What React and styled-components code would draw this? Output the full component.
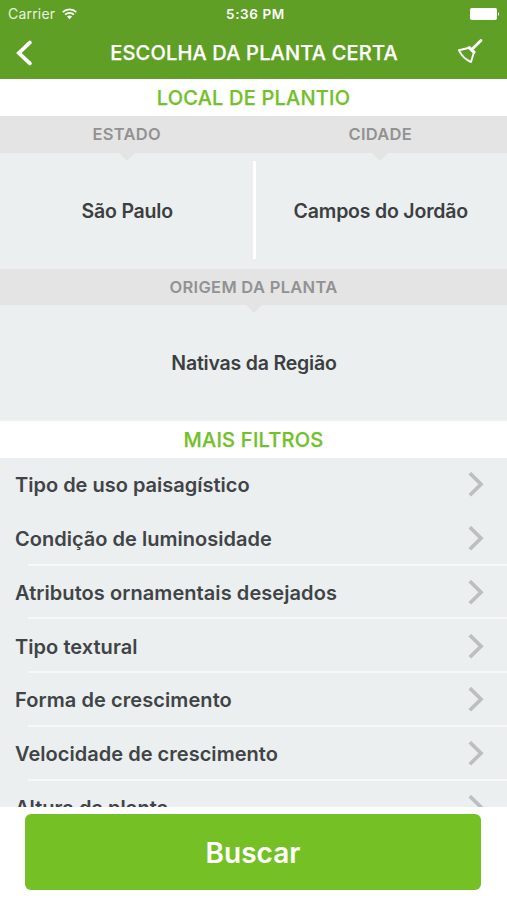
import React from "react";
import styled, { createGlobalStyle } from "styled-components";

const filters = [
  { label: "Tipo de uso paisagístico", spacing: 0, faint: true },
  { label: "Condição de luminosidade", spacing: 0.02 },
  { label: "Atributos ornamentais desejados", spacing: 0.07 },
  { label: "Tipo textural", spacing: 0.05 },
  { label: "Forma de crescimento", spacing: 0.08 },
  { label: "Velocidade de crescimento", spacing: 0.03 },
  { label: "Altura da planta", spacing: 0.04 },
];

const GlobalStyle = createGlobalStyle`
  * {
    box-sizing: border-box;
  }
  body {
    margin: 0;
    background: #fff;
    font-family: Inter, "Liberation Sans", sans-serif;
  }
  button {
    font-family: inherit;
    border: 0;
    padding: 0;
    background: none;
  }
`;

const Screen = styled.div`
  display: flex;
  flex-direction: column;
  height: 900px;
  overflow: hidden;
`;

const Header = styled.header`
  height: 79px;
  flex: none;
  background: #5f9f25;
  color: #fff;
`;

const StatusBar = styled.div`
  display: grid;
  grid-template-columns: 1fr auto 1fr;
  align-items: center;
  height: 27px;
  padding: 0 7px 0 8px;
  font-size: 14px;
  line-height: 28px;
`;

const Carrier = styled.div`
  display: flex;
  align-items: center;
  gap: 7px;
  color: #e9f3df;
  letter-spacing: 0.2px;
`;

const Clock = styled.div`
  margin-left: 3px;
  font-size: 13.5px;
  font-weight: 600;
  letter-spacing: 0.6px;
`;

const Battery = styled.svg`
  justify-self: end;
`;

const NavBar = styled.div`
  display: grid;
  grid-template-columns: 60px 1fr 60px;
  align-items: center;
  height: 51px;
`;

const NavButton = styled.button`
  display: flex;
  justify-content: ${(props) => (props.$right ? "flex-end" : "flex-start")};
  padding: ${(props) => (props.$right ? "0 24px 4px 0" : "0 0 1px 15px")};
  color: #fff;
`;

const Title = styled.h1`
  margin: 0;
  padding-left: 1px;
  text-align: center;
  font-size: 20px;
  font-weight: 500;
  line-height: 52px;
  white-space: nowrap;
  -webkit-text-stroke: 0.25px currentColor;
  letter-spacing: ${(props) => props.$spacing}px;
`;

const SectionTitle = styled.h2`
  flex: none;
  margin: 0;
  height: 37px;
  font-size: 20px;
  font-weight: 500;
  line-height: 38px;
  text-align: center;
  color: #73bf2c;
  -webkit-text-stroke: 0.25px currentColor;
  letter-spacing: ${(props) => props.$spacing}px;
`;

const Columns = styled.div`
  display: flex;
  flex: none;
`;

const Field = styled.div`
  flex: 1;
`;

const FieldLabel = styled.div`
  position: relative;
  height: 36.5px;
  background: #e4e4e4;
  color: #929292;
  font-size: 16.5px;
  font-weight: 600;
  line-height: 37px;
  text-align: center;
  letter-spacing: ${(props) => props.$spacing}px;

  &::after {
    content: "";
    position: absolute;
    top: 100%;
    left: 50%;
    margin-left: -8px;
    border: 8px solid transparent;
    border-top-color: #e4e4e4;
    border-bottom: 0;
  }
`;

const FieldValue = styled.div`
  display: flex;
  align-items: center;
  height: 116px;
  background: #ebeff0;
  color: #3c3f41;
  font-size: 19.5px;
  font-weight: 600;
  letter-spacing: ${(props) => props.$spacing}px;

  span {
    flex: 1;
    padding-left: 1px;
    text-align: center;
  }
`;

const Divider = styled.div`
  position: relative;
  width: 3px;
  height: 98px;
  margin: 0 -2px 1px -1px;
  background: #fff;
`;

const List = styled.div`
  flex: 1;
  min-height: 0;
  overflow: hidden;
  background: #ebeff0;
`;

const Row = styled.div`
  display: flex;
  align-items: center;
  justify-content: space-between;
  height: 53.75px;
  padding: 1px 23px 0 15px;
  background: linear-gradient(#f6f8f9, #f6f8f9) 28px 100% / 100%
    ${(props) => (props.$faint ? 0 : 2)}px no-repeat;
  color: #414446;
  font-size: 20px;
  font-weight: 600;
  letter-spacing: ${(props) => props.$spacing}px;
`;

const Footer = styled.footer`
  flex: none;
  height: 93px;
  padding: 7px 26px 10px 25px;
  background: #fff;
`;

const SearchButton = styled.button`
  width: 100%;
  height: 76px;
  padding-top: 2px;
  border-radius: 6px;
  background: #75c125;
  color: #fff;
  font-size: 28px;
  font-weight: 600;
`;

const WifiIcon = () => (
  <svg width="15" height="12" viewBox="0 0 15 12" fill="none" stroke="#fff" strokeWidth="1.8">
    <path d="M0.7 4.1C4.5 0.4 10.5 0.4 14.3 4.1" />
    <path d="M3.1 6.6C5.6 4.2 9.4 4.2 11.9 6.6" />
    <path d="M5 8.6C6.4 7.2 8.6 7.2 10 8.6L7.5 11.3Z" fill="#fff" stroke="none" />
  </svg>
);

const BackIcon = () => (
  <svg
    width="18"
    height="26"
    viewBox="0 0 18 26"
    fill="none"
    stroke="#fff"
    strokeWidth="3.8"
    strokeLinecap="round"
  >
    <path d="M14.8 2.6L3.9 13L14.8 23.4" />
  </svg>
);

const BroomIcon = () => (
  <svg
    width="26"
    height="26"
    viewBox="0 0 26 26"
    fill="none"
    stroke="#fff"
    strokeLinecap="round"
    strokeLinejoin="round"
  >
    <path d="M24 2.4L15.5 10.8" strokeWidth="2.8" />
    <path d="M12.2 9.6L17 14.2" strokeWidth="3.2" />
    <path d="M11.5 10L1.8 12.2C4.4 17.5 8.6 21.8 14 24L16.8 14.8" strokeWidth="1.9" />
  </svg>
);

const Chevron = () => (
  <svg width="16" height="26" viewBox="0 0 16 26" fill="none" stroke="#bcbebf" strokeWidth="3.7">
    <path d="M1.8 1.2L13 12.2L1.8 23.2" />
  </svg>
);

const App = () => {
  return (
    <>
      <GlobalStyle />
      <Screen>
        <Header>
          <StatusBar>
            <Carrier>
              Carrier
              <WifiIcon />
            </Carrier>
            <Clock>5:36 PM</Clock>
            <Battery width="30" height="12" viewBox="0 0 30 12" fill="#fff">
              <rect x="0" y="0" width="27" height="12" rx="1.8" />
              <path d="M28 4Q30 6 28 8Z" />
            </Battery>
          </StatusBar>
          <NavBar>
            <NavButton aria-label="Voltar">
              <BackIcon />
            </NavButton>
            <Title $spacing={0.18}>ESCOLHA DA PLANTA CERTA</Title>
            <NavButton $right aria-label="Limpar">
              <BroomIcon />
            </NavButton>
          </NavBar>
        </Header>

        <SectionTitle $spacing={0.2}>LOCAL DE PLANTIO</SectionTitle>
        <Columns>
          <Field>
            <FieldLabel $spacing={0.25}>ESTADO</FieldLabel>
            <FieldValue $spacing={-0.2}>
              <span>São Paulo</span>
              <Divider />
            </FieldValue>
          </Field>
          <Field>
            <FieldLabel $spacing={0.25}>CIDADE</FieldLabel>
            <FieldValue $spacing={-0.2}>
              <span>Campos do Jordão</span>
            </FieldValue>
          </Field>
        </Columns>
        <Columns>
          <Field>
            <FieldLabel $spacing={0.3}>ORIGEM DA PLANTA</FieldLabel>
            <FieldValue $spacing={-0.2}>
              <span>Nativas da Região</span>
            </FieldValue>
          </Field>
        </Columns>

        <SectionTitle $spacing={0.25}>MAIS FILTROS</SectionTitle>
        <List>
          {filters.map((filter) => (
            <Row key={filter.label} $spacing={filter.spacing} $faint={filter.faint}>
              {filter.label}
              <Chevron />
            </Row>
          ))}
        </List>

        <Footer>
          <SearchButton>Buscar</SearchButton>
        </Footer>
      </Screen>
    </>
  );
};

export default App;
